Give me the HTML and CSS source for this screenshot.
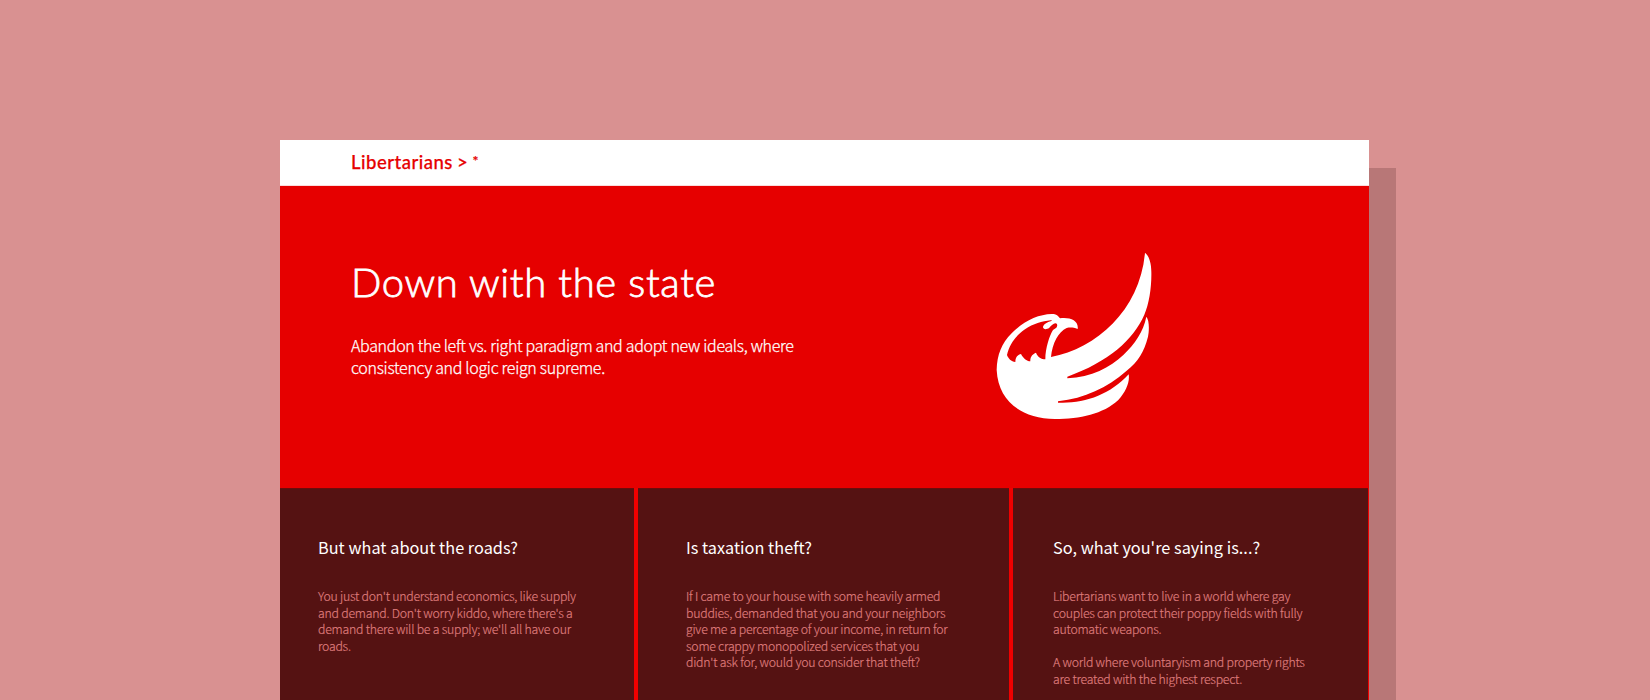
FILE: index.html
```html
<!DOCTYPE html>
<html lang="en">
<head>
<meta charset="utf-8">
<title>Libertarians</title>
<link rel="stylesheet" href="styles.css">
</head>
<body>
<main class="window">
  <header class="topbar"><a class="brand">Libertarians &gt; <span class="star">*</span></a></header>
  <section class="hero">
    <div class="hero-copy">
      <h1 class="hero-title">Down with the state</h1>
      <p class="hero-text">Abandon the left vs. right paradigm and adopt new ideals, where<br>consistency and logic reign supreme.</p>
    </div>
    <svg class="eagle" viewBox="0 0 570 570" aria-hidden="true">
      <path fill="#fff" fill-rule="evenodd" d="M495 38C506 46 514 68 514 95C515 140 508 190 493 224C460 300 385 365 262 410L262 415C335 412 390 382 430 345C465 311 490 275 499 230C508 240 508 270 504 290C492 335 475 365 440 392C380 444 315 474 234 484L234 488C310 492 390 465 446 403C450 425 438 455 415 480C370 522 300 537 225 537C125 535 55 485 50 390C51 345 65 310 95 280C130 243 175 223 215 222C230 222 235 228 240 235C270 231 297 242 293 267C280 262 270 262 260 264C235 276 217 310 213 351C350 325 480 210 495 38Z
      M81 345C88 312 108 287 135 268C160 251 186 244 212 241C217 240 216 243 212 244C197 248 189 256 189 262C190 269 200 269 208 263C214 257 220 251 226 250C233 250 233 258 229 263L219 270C209 285 196 325 196 358C184 358 174 352 168 338C158 342 150 350 151 364C140 364 129 354 123 342C112 344 106 353 106 366C94 366 84 354 81 345Z"/>
    </svg>
  </section>
  <section class="features">
    <article class="feature">
      <h2 class="feature-title">But what about the roads?</h2>
      <p class="feature-text">You just don't understand economics, like supply<br>and demand. Don't worry kiddo, where there's a<br>demand there will be a supply; we'll all have our<br>roads.</p>
    </article>
    <article class="feature feature-middle">
      <h2 class="feature-title">Is taxation theft?</h2>
      <p class="feature-text">If I came to your house with some heavily armed<br>buddies, demanded that you and your neighbors<br>give me a percentage of your income, in return for<br>some crappy monopolized services that you<br>didn't ask for, would you consider that theft?</p>
    </article>
    <article class="feature feature-last">
      <h2 class="feature-title">So, what you're saying is...?</h2>
      <p class="feature-text">Libertarians want to live in a world where gay<br>couples can protect their poppy fields with fully<br>automatic weapons.</p>
      <p class="feature-text">A world where voluntaryism and property rights<br>are treated with the highest respect.</p>
    </article>
  </section>
</main>
</body>
</html>
```
FILE: styles.css
```css
* { box-sizing: border-box; }
body {
  margin: 0;
  height: 700px;
  overflow: hidden;
  padding: 140px 0 0 280px;
  background: #d99191;
  font-family: "Noto Sans CJK SC", "Open Sans", sans-serif;
  font-weight: 300;
  white-space: nowrap;
}
h1, h2, p { margin: 0; }
.window {
  width: 1089px;
  height: 560px;
  display: flex;
  flex-direction: column;
  background: #e60000;
  box-shadow: 27px 28px 0 #b87777;
}
.topbar {
  height: 46px;
  padding-left: 71px;
  background: #fff;
  border-bottom: 1px solid #fbdcdc;
}
.brand {
  font: 500 18.5px/45px Lato, sans-serif;
  letter-spacing: 0.5px;
  word-spacing: -1px;
  color: #e60000;
  -webkit-text-stroke: 0.25px currentColor;
}
.star { font-size: 14px; line-height: 1; vertical-align: 3px; }
.hero {
  height: 302px;
  display: flex;
  color: #fff;
}
.hero-copy { width: 629px; padding: 72px 0 0 71px; }
.hero-title {
  font: 300 40px/48px Lato, sans-serif;
  letter-spacing: 0.65px;
  -webkit-text-stroke: 0.8px currentColor;
}
.hero-text {
  margin-top: 28px;
  font-size: 16px;
  line-height: 22px;
  letter-spacing: -0.31px;
  -webkit-text-stroke: 0.25px currentColor;
}
.eagle { width: 190px; height: 190px; margin: 54px 0 0 71px; }
.features {
  flex: 1;
  display: grid;
  grid-template-columns: 354px 371px 355px;
  column-gap: 4px;
  background: #f00000;
}
.feature {
  padding: 47px 0 0 38px;
  background: #551212;
  border-top: 1px solid #6c0c0c;
}
.feature-middle { padding-left: 48px; }
.feature-last { padding-left: 40px; }
.feature-title {
  font-size: 16.3px;
  font-weight: 400;
  line-height: 22px;
  letter-spacing: 0.02px;
  color: #fff;
  margin-bottom: 30px;
}
.feature-text {
  font-size: 12.3px;
  line-height: 16.6px;
  letter-spacing: -0.24px;
  -webkit-text-stroke: 0.2px currentColor;
  color: #df7b7b;
  margin-bottom: 16.5px;
}
.feature-text:last-child { margin-bottom: 0; }
```
